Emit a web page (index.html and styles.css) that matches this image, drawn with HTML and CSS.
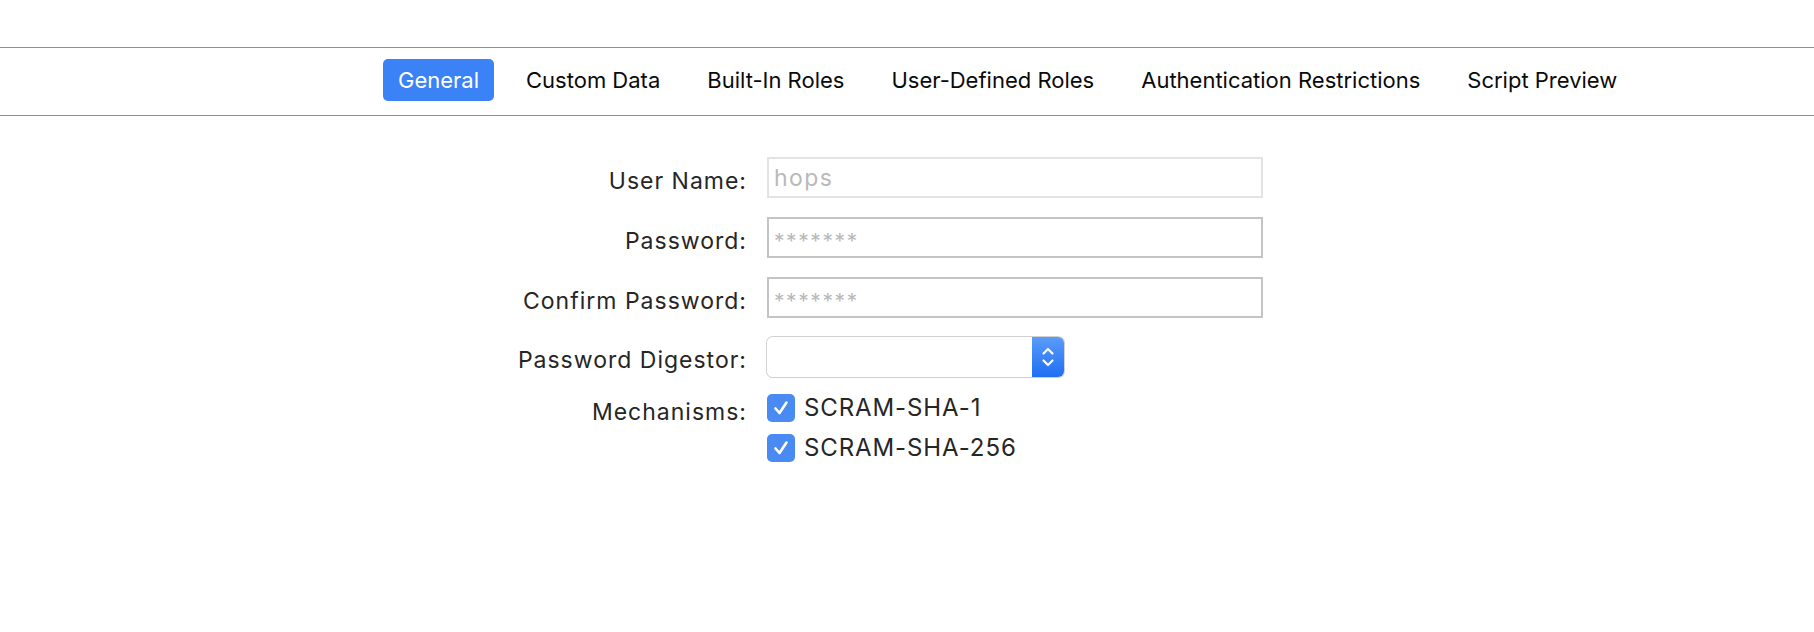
FILE: index.html
```html
<!DOCTYPE html>
<html>
<head>
<meta charset="utf-8">
<link rel="stylesheet" href="styles.css">
</head>
<body>
<div class="top-space"></div>
<nav class="tabbar">
  <div class="tabs">
    <span class="tab active">General</span>
    <span class="tab">Custom Data</span>
    <span class="tab">Built-In Roles</span>
    <span class="tab">User-Defined Roles</span>
    <span class="tab">Authentication Restrictions</span>
    <span class="tab">Script Preview</span>
  </div>
</nav>
<form class="form">
  <label class="label">User Name:</label>
  <div class="field disabled"><span class="value">hops</span></div>

  <label class="label">Password:</label>
  <div class="field"><span class="value stars">*******</span></div>

  <label class="label">Confirm Password:</label>
  <div class="field"><span class="value stars">*******</span></div>

  <label class="label">Password Digestor:</label>
  <div class="select">
    <div class="select-body"></div>
    <div class="select-btn">
      <svg width="14" height="24" viewBox="0 0 14 24" fill="none" stroke="#fff" stroke-width="2.2" stroke-linecap="round" stroke-linejoin="round">
        <path d="M2.5 8.5 L7 4 L11.5 8.5"/>
        <path d="M2.5 15.5 L7 20 L11.5 15.5"/>
      </svg>
    </div>
  </div>

  <label class="label mech-label">Mechanisms:</label>
  <div class="checks">
    <div class="check-row">
      <span class="checkbox">
        <svg width="20" height="20" viewBox="0 0 20 20" fill="none" stroke="#fff" stroke-width="2.6" stroke-linecap="round" stroke-linejoin="round"><path d="M4.5 10.5 L8.5 15 L15.5 4.5"/></svg>
      </span>
      <span class="check-text">SCRAM-SHA-1</span>
    </div>
    <div class="check-row">
      <span class="checkbox">
        <svg width="20" height="20" viewBox="0 0 20 20" fill="none" stroke="#fff" stroke-width="2.6" stroke-linecap="round" stroke-linejoin="round"><path d="M4.5 10.5 L8.5 15 L15.5 4.5"/></svg>
      </span>
      <span class="check-text">SCRAM-SHA-256</span>
    </div>
  </div>
</form>
</body>
</html>
```
FILE: styles.css
```css
html, body {
  margin: 0;
  padding: 0;
  background: #ffffff;
}
body {
  font-family: Inter, "Noto Sans", "Liberation Sans", sans-serif;
  color: #262626;
}
.top-space {
  height: 47px;
}
.tabbar {
  border-top: 1px solid #8f8f8f;
  border-bottom: 1px solid #8f8f8f;
  height: 67px;
  display: flex;
  align-items: center;
}
.tabs {
  display: flex;
  align-items: center;
  gap: 17px;
  padding-left: 383px;
  margin-top: -4px;
}
.tab {
  font-size: 22px;
  color: #0a0a0a;
  padding: 0 15px;
  height: 42px;
  line-height: 42px;
  border-radius: 5px;
  white-space: nowrap;
}
.tab.active {
  background: #3a82f6;
  color: #fff;
}
.form {
  display: grid;
  grid-template-columns: 260px 496px;
  column-gap: 20px;
  row-gap: 19px;
  padding-left: 487px;
  padding-top: 41px;
  align-items: center;
}
.label {
  text-align: right;
  font-size: 23px;
  letter-spacing: 1px;
  color: #262626;
  white-space: nowrap;
  padding-top: 6px;
}
.field {
  height: 41px;
  box-sizing: border-box;
  border: 2px solid #c4c4c4;
  background: #fff;
  display: flex;
  align-items: center;
  padding-left: 5px;
}
.field.disabled {
  border-color: #e3e3e3;
}
.value {
  font-size: 23px;
  letter-spacing: 1.4px;
  color: #b9b9b9;
}
.stars {
  font-size: 21px;
  letter-spacing: 1.6px;
  padding-top: 8px;
}
.select {
  width: 297px;
  height: 40px;
  display: flex;
  border-radius: 6px;
  overflow: hidden;
  box-shadow: 0 0 0 1px #d0d0d0, 0 1px 1px rgba(0,0,0,0.08);
}
.select-body {
  flex: 1;
  background: #fff;
}
.select-btn {
  width: 32px;
  background: linear-gradient(#5b9cf9, #1f6ef4);
  display: flex;
  align-items: center;
  justify-content: center;
}
.mech-label {
  align-self: start;
  padding-top: 2px;
  line-height: 28px;
}
.checks {
  display: flex;
  flex-direction: column;
  gap: 12px;
  align-self: start;
  margin-top: -2px;
}
.check-row {
  display: flex;
  align-items: center;
  gap: 9px;
}
.checkbox {
  width: 28px;
  height: 28px;
  box-sizing: border-box;
  border-radius: 5px;
  background: #4a8bf3;
  display: flex;
  align-items: center;
  justify-content: center;
}
.check-text {
  font-size: 24px;
  letter-spacing: 0.9px;
  color: #262626;
  line-height: 28px;
}
```
